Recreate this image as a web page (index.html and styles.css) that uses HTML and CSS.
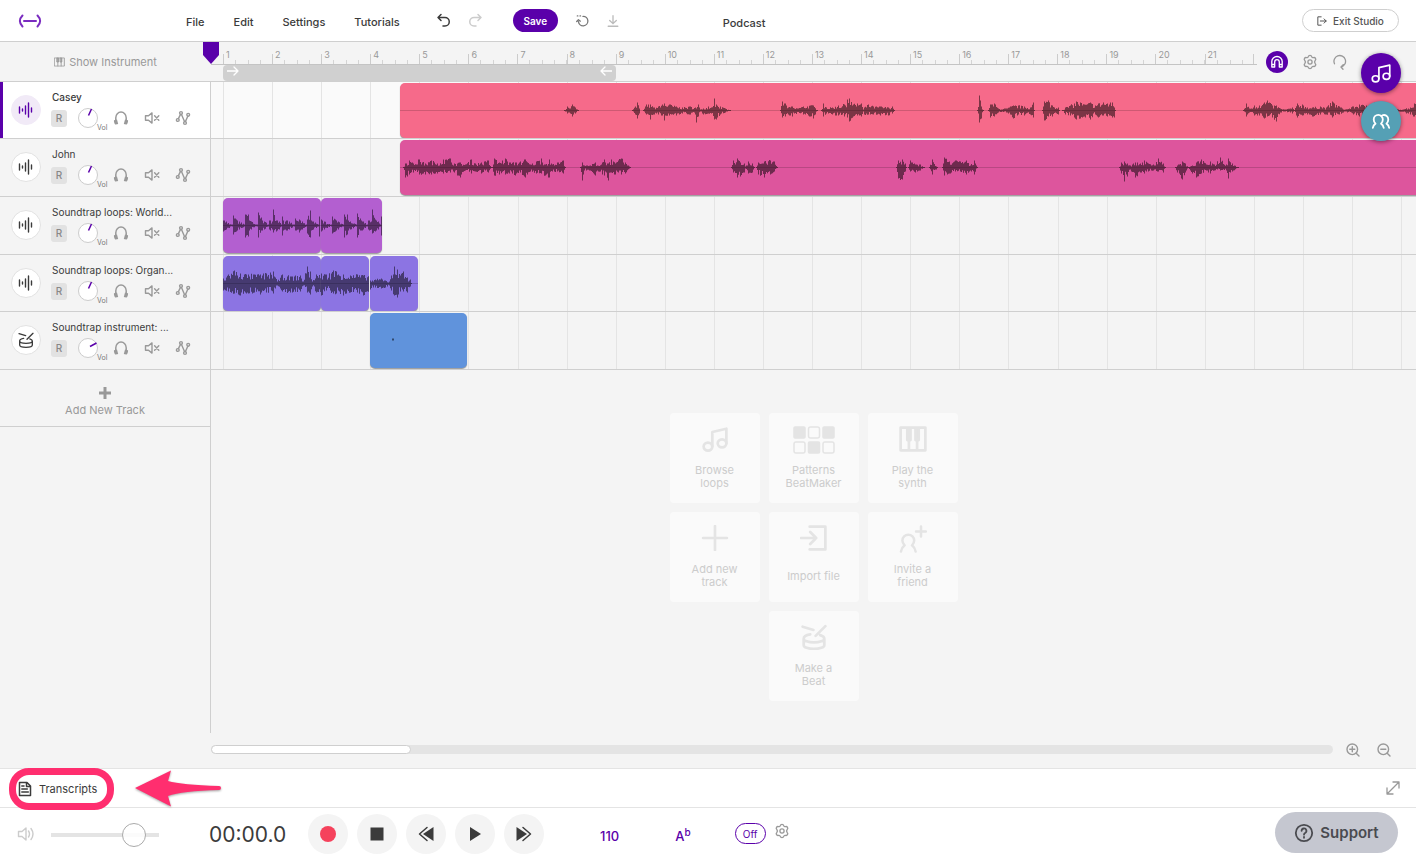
FILE: index.html
```html
<!DOCTYPE html>
<html lang="en">
<head>
<meta charset="utf-8">
<meta name="viewport" content="width=device-width, initial-scale=1">
<title>Podcast</title>
<link rel="stylesheet" href="styles.css">
</head>
<body>
<svg class="sprite" aria-hidden="true">
  <symbol id="i-wave" viewBox="0 0 16 16"><path d="M1.5 5v6M4.5 7v2M7.5 4v8M10.500 1v14M13.500 6v4"/></symbol>
  <symbol id="i-drum" viewBox="0 0 24 24"><path d="M1.500 2.500l10 3M22.500 2L13.500 11M8.500 9.500C5 10 2.500 11.500 2.500 13.500c0 2 4.200 3.500 9.500 3.500s9.500-1.500 9.500-3.500c0-1.400-1.500-2.500-3.800-3.200M2.500 13.500v6c0 2 4.200 3.500 9.500 3.500s9.500-1.500 9.500-3.500v-6"/></symbol>
  <symbol id="i-phones" viewBox="0 0 16 16"><path d="M2.800 12V7.800a5.200 5.700 0 0 1 10.400 0V12" fill="none" stroke="currentColor" stroke-width="1.500"/><path d="M1 10.200l3-.8 1.200 4.600-2.400.6c-1 0-2.200-3-1.800-4.400zM15 10.200l-3-.8-1.200 4.600 2.400.6c1 0 2.200-3 1.800-4.400z" fill="currentColor" stroke="none"/></symbol>
  <symbol id="i-mute" viewBox="0 0 16 16"><path d="M1.500 5.800h3L8 2.900v10.200l-3.500-2.900h-3zM10.600 5.800l4.200 4.400M14.800 5.800l-4.200 4.400"/></symbol>
  <symbol id="i-auto" viewBox="0 0 16 16"><g><circle cx="2.800" cy="10" r="1.400"/><circle cx="6" cy="3" r="1.400"/><circle cx="10" cy="13" r="1.400"/><circle cx="13.200" cy="4.800" r="1.400"/><path d="M3.400 8.600L5.500 4.400M6.500 4.400l3 7.200M10.400 11.600l2.400-5.400"/></g></symbol>
  <symbol id="i-gear" viewBox="0 0 16 16"><path d="M6.300 2.600C6.700 1 9.300 1 9.700 2.600c.3.900 1 1.200 1.800 1 1.700-.6 3 1.500 1.800 2.700-.7.800-.7 2.600 0 3.400 1.200 1.200-.1 3.300-1.800 2.700-.8-.2-1.500.1-1.800 1-.4 1.600-3 1.600-3.400 0-.3-.9-1-1.200-1.800-1-1.700.6-3-1.500-1.800-2.700.7-.8.7-2.600 0-3.400-1.200-1.200.1-3.300 1.800-2.700.8.200 1.500-.1 1.800-1z"/><circle cx="8" cy="8" r="2.100"/></symbol>
  <symbol id="i-note" viewBox="0 0 24 24"><ellipse cx="5.500" cy="19" rx="4" ry="3.700"/><ellipse cx="18.500" cy="16" rx="4" ry="3.700"/><path d="M9.500 19V5.500l13-3V16"/></symbol>
  <symbol id="i-keys" viewBox="0 0 16 14"><path d="M1 1h14v12H1zM5.600 7v6M10.400 7v6"/><path d="M4.600 1h2v6h-2zM9.400 1h2v6h-2z" fill="currentColor"/></symbol>
</svg>

<header class="topbar">
  <a class="logo" href="#" aria-label="Home"><svg viewBox="0 0 24 14"><path d="M4.500 1.500C1 5 1 9 4.500 12.500M19.500 1.500C23 5 23 9 19.500 12.500M6 7h12"/></svg></a>
  <nav class="menu" aria-label="Main">
    <button>File</button><button>Edit</button><button>Settings</button><button>Tutorials</button>
  </nav>
  <div class="history">
    <button aria-label="Undo"><svg viewBox="0 0 16 16"><path d="M5 1.500L2 4.500l3 3M2 4.500h7a4.200 4.200 0 0 1 0 8.500H7"/></svg></button>
    <button class="faint" aria-label="Redo"><svg viewBox="0 0 16 16"><path d="M11 1.500l3 3-3 3M14 4.500H7A4.200 4.200 0 0 0 7 13h2"/></svg></button>
  </div>
  <button class="save">Save</button>
  <div class="file-tools">
    <button aria-label="Revert"><svg viewBox="0 0 16 16"><path d="M8 2.700a5.400 5.400 0 1 1-5.200 6M.8 8.500l2-2 2.200 1.700M1.500 2.200h.6M4.600 2.200h.6"/></svg></button>
    <button class="pale" aria-label="Download"><svg viewBox="0 0 16 16"><path d="M8 2v9M4.200 7.400L8 11l3.800-3.600M2.500 14h11"/></svg></button>
  </div>
  <h1>Podcast</h1>
  <button class="exit"><svg viewBox="0 0 12 12"><path d="M5 1H1v10h4M4 6h7M8.500 3.500L11 6 8.500 8.500"/></svg>Exit Studio</button>
</header>

<main class="studio">
  <div class="timeline-head">
    <button class="show-instrument"><svg viewBox="0 0 16 14"><use href="#i-keys"/></svg>Show Instrument</button>
    <div class="ruler">
      <ol class="bars">
        <li>1</li><li>2</li><li>3</li><li>4</li><li>5</li><li>6</li><li>7</li><li>8</li><li>9</li><li>10</li><li>11</li><li>12</li><li>13</li><li>14</li><li>15</li><li>16</li><li>17</li><li>18</li><li>19</li><li>20</li><li>21</li>
      </ol>
      <div class="loop">
        <svg viewBox="0 0 12 10"><path d="M0 5h11M7 1l4 4-4 4"/></svg>
        <svg viewBox="0 0 12 10"><path d="M12 5H1M5 1L1 5l4 4"/></svg>
      </div>
      <svg class="playhead" viewBox="0 0 16 22"><path d="M0 0h16v13l-8 9-8-9z"/></svg>
    </div>
    <div class="timeline-tools">
      <button class="snap" aria-label="Snap"><svg viewBox="0 0 14 14"><path d="M1.800 12V6.500a5.200 5 0 0 1 10.400 0V12H9.300V7a2.300 2.300 0 0 0-4.600 0v5zM2 9.500h2.500M9.500 9.500H12"/></svg></button>
      <button aria-label="Timeline settings"><svg viewBox="0 0 16 16"><use href="#i-gear"/></svg></button>
      <button aria-label="Loop"><svg viewBox="0 0 16 16"><path d="M2.500 9.800A5.800 5.800 0 1 1 9 13M11.200 10.600L9 13l2 2.300"/></svg></button>
    </div>
  </div>

  <section class="tracks" aria-label="Tracks">
    <article class="track selected">
      <div class="track-head">
        <span class="avatar"><svg viewBox="0 0 16 16"><use href="#i-wave"/></svg></span>
        <div class="track-body">
          <h2>Casey</h2>
          <div class="controls"><button class="rec" aria-label="Arm">R</button><button class="knob" aria-label="Volume"><svg viewBox="0 0 20 20"><path d="M10.500 7.500L13.500 1"/></svg><span>Vol</span></button><div class="icons"><button aria-label="Solo"><svg><use href="#i-phones"/></svg></button><button aria-label="Mute"><svg><use href="#i-mute"/></svg></button><button aria-label="Automation"><svg><use href="#i-auto"/></svg></button></div></div>
        </div>
      </div>
      <div class="lane"><div class="clip coral" style="left:189px;width:1280px"><svg class="wave" data-wave="casey"></svg></div></div>
    </article>
    <article class="track">
      <div class="track-head">
        <span class="avatar"><svg viewBox="0 0 16 16"><use href="#i-wave"/></svg></span>
        <div class="track-body">
          <h2>John</h2>
          <div class="controls"><button class="rec" aria-label="Arm">R</button><button class="knob" aria-label="Volume"><svg viewBox="0 0 20 20"><path d="M10.500 7.500L13.500 1"/></svg><span>Vol</span></button><div class="icons"><button aria-label="Solo"><svg><use href="#i-phones"/></svg></button><button aria-label="Mute"><svg><use href="#i-mute"/></svg></button><button aria-label="Automation"><svg><use href="#i-auto"/></svg></button></div></div>
        </div>
      </div>
      <div class="lane"><div class="clip pink" style="left:189px;width:1280px"><svg class="wave" data-wave="john"></svg></div></div>
    </article>
    <article class="track">
      <div class="track-head">
        <span class="avatar"><svg viewBox="0 0 16 16"><use href="#i-wave"/></svg></span>
        <div class="track-body">
          <h2>Soundtrap loops: World...</h2>
          <div class="controls"><button class="rec" aria-label="Arm">R</button><button class="knob" aria-label="Volume"><svg viewBox="0 0 20 20"><path d="M10.500 7.500L13.500 1"/></svg><span>Vol</span></button><div class="icons"><button aria-label="Solo"><svg><use href="#i-phones"/></svg></button><button aria-label="Mute"><svg><use href="#i-mute"/></svg></button><button aria-label="Automation"><svg><use href="#i-auto"/></svg></button></div></div>
        </div>
      </div>
      <div class="lane">
        <div class="clip purple" style="left:12px;width:98px"><svg class="wave" data-wave="worldA"></svg></div>
        <div class="clip purple" style="left:110px;width:61px"><svg class="wave" data-wave="worldB"></svg></div>
      </div>
    </article>
    <article class="track">
      <div class="track-head">
        <span class="avatar"><svg viewBox="0 0 16 16"><use href="#i-wave"/></svg></span>
        <div class="track-body">
          <h2>Soundtrap loops: Organ...</h2>
          <div class="controls"><button class="rec" aria-label="Arm">R</button><button class="knob" aria-label="Volume"><svg viewBox="0 0 20 20"><path d="M10.500 7.500L13.500 1"/></svg><span>Vol</span></button><div class="icons"><button aria-label="Solo"><svg><use href="#i-phones"/></svg></button><button aria-label="Mute"><svg><use href="#i-mute"/></svg></button><button aria-label="Automation"><svg><use href="#i-auto"/></svg></button></div></div>
        </div>
      </div>
      <div class="lane">
        <div class="clip violet" style="left:12px;width:98px"><svg class="wave" data-wave="organA"></svg></div>
        <div class="clip violet" style="left:110px;width:48px"><svg class="wave" data-wave="organB"></svg></div>
        <div class="clip violet" style="left:159px;width:48px"><svg class="wave" data-wave="organC"></svg></div>
      </div>
    </article>
    <article class="track">
      <div class="track-head">
        <span class="avatar"><svg class="drum" viewBox="0 0 24 24"><use href="#i-drum"/></svg></span>
        <div class="track-body">
          <h2>Soundtrap instrument: ...</h2>
          <div class="controls"><button class="rec" aria-label="Arm">R</button><button class="knob" aria-label="Volume"><svg viewBox="0 0 20 20"><path d="M12 8.500L18.500 5"/></svg><span>Vol</span></button><div class="icons"><button aria-label="Solo"><svg><use href="#i-phones"/></svg></button><button aria-label="Mute"><svg><use href="#i-mute"/></svg></button><button aria-label="Automation"><svg><use href="#i-auto"/></svg></button></div></div>
        </div>
      </div>
      <div class="lane"><div class="clip blue" style="left:159px;width:97px"><svg class="wave" viewBox="0 0 97 55"><path d="M22 25.500h2v2h-2z"/></svg></div></div>
    </article>
  </section>

  <div class="workspace">
    <div class="side">
      <button class="add-track"><svg viewBox="0 0 12 12"><path d="M6 0v12M0 6h12"/></svg>Add New Track</button>
    </div>
    <div class="start-area">
      <div class="tiles">
        <button class="tile"><svg viewBox="0 0 24 24"><use href="#i-note"/></svg><span>Browse<br>loops</span></button>
        <button class="tile"><svg class="pads" viewBox="0 0 42 28"><g fill="currentColor"><rect x="1" y="1" width="11" height="11" rx="1"/><rect x="30" y="1" width="11" height="11" rx="1"/><rect x="15.500" y="16" width="11" height="11" rx="1"/></g><rect x="15.500" y="1" width="11" height="11" rx="2"/><rect x="1" y="16" width="11" height="11" rx="2"/><rect x="30" y="16" width="11" height="11" rx="2"/></svg><span>Patterns<br>BeatMaker</span></button>
        <button class="tile"><svg viewBox="0 0 26 24"><path d="M1.500 1.500h23v21h-23zM9.200 12v10M16.800 12v10"/><path d="M7.700 2h3v11h-3zM15.300 2h3v11h-3z" fill="currentColor"/></svg><span>Play the<br>synth</span></button>
        <button class="tile"><svg viewBox="0 0 24 24"><path d="M12 1v22M1 12h22"/></svg><span>Add new<br>track</span></button>
        <button class="tile"><svg viewBox="0 0 24 24"><path d="M8 1.500h14.500v21H8M0 12h14M8.500 6.500L14 12l-5.500 5.500"/></svg><span>Import file</span></button>
        <button class="tile"><svg class="invite" viewBox="0 0 28 28"><path d="M2 26.500c.6-3 1.800-4.800 3.600-6.200-1.400-1.400-2.200-2.900-2.200-4.700a5.900 5.900 0 0 1 11.800 0c0 1.800-.8 3.300-2.200 4.700 1.800 1.400 3 3.200 3.600 6.200M22 1.500v10M17 6.500h10"/></svg><span>Invite a<br>friend</span></button>
        <button class="tile last"><svg viewBox="0 0 24 24"><use href="#i-drum"/></svg><span>Make a<br>Beat</span></button>
      </div>
    </div>
  </div>

  <div class="scroll-row">
    <div class="scrollbar"><div class="thumb"></div></div>
    <button aria-label="Zoom in"><svg viewBox="0 0 16 16"><circle cx="7.300" cy="7.300" r="5.300"/><path d="M11.200 11.200L14 14M4.800 7.300h5M7.300 4.800v5"/></svg></button>
    <button aria-label="Zoom out"><svg viewBox="0 0 16 16"><circle cx="7.300" cy="7.300" r="5.300"/><path d="M11.200 11.200L14 14M4.800 7.300h5"/></svg></button>
  </div>

  <div class="dock">
    <button class="dock-loops" aria-label="Loops"><svg viewBox="0 0 24 24"><use href="#i-note"/></svg></button>
    <button class="dock-people" aria-label="Collaborators"><svg viewBox="0 0 22 18"><path d="M2 16.500c.4-2.300 1.400-3.700 3-4.600C3.700 10.800 3 9.200 3 7.300a5 5 0 0 1 10 0c0 1.900-.7 3.500-2 4.600 1.600.9 2.600 2.300 3 4.600M12.500 2.700A4.800 4.800 0 0 1 19 7.300c0 1.900-.7 3.500-2 4.600 1.600.9 2.600 2.300 3 4.600"/></svg></button>
  </div>
</main>

<section class="transcripts">
  <button class="transcripts-toggle"><svg viewBox="0 0 14 16"><path d="M1.500 1.500H9l3.500 3.500v9.500h-11zM8.500 1.500V5.500H12.500M3.800 5H6M3.800 8h5.500M3.800 11h6.500"/></svg>Transcripts</button>
  <button class="expand" aria-label="Expand"><svg viewBox="0 0 14 14"><path d="M1.500 12.500l11-11M7 1h6v6M1 7v6h6"/></svg></button>
  <span class="highlight"></span>
  <svg class="pointer" viewBox="0 0 86 38"><path d="M0 18L36 0.500 33 11q14 4 51 5a1.500 1.500 0 0 1 0 4q-37 1-51 6l3 10.500z"/></svg>
</section>

<footer class="transport">
  <label class="volume" for="master"><svg viewBox="0 0 18 16"><path d="M1.500 5.500h3.500l4-3.500v12l-4-3.500H1.500zM11.500 5q2 3 0 6M14 2.500q4 5.500 0 11"/></svg></label>
  <input id="master" type="range" min="0" max="100" value="84" aria-label="Master volume">
  <output class="time">00:00.0</output>
  <div class="buttons">
    <button aria-label="Record"><svg viewBox="0 0 16 16"><circle cx="8" cy="8" r="8" fill="#f5425c"/></svg></button>
    <button aria-label="Stop"><svg viewBox="0 0 16 16"><path d="M1.500 1.500h13v13h-13z"/></svg></button>
    <button aria-label="Rewind"><svg viewBox="0 0 16 16"><path d="M15.500 1v14L5 8z"/><path d="M9 1.500L1.500 8 9 14.500" fill="none" stroke="currentColor" stroke-width="1.500"/></svg></button>
    <button aria-label="Play"><svg viewBox="0 0 16 16"><path d="M3 1v14l11-7z"/></svg></button>
    <button aria-label="Forward"><svg viewBox="0 0 16 16"><path d="M.5 1v14L11 8z"/><path d="M7 1.500L14.500 8 7 14.500" fill="none" stroke="currentColor" stroke-width="1.500"/></svg></button>
  </div>
  <button class="tempo">110</button>
  <button class="key">A<sup>b</sup></button>
  <button class="metronome">Off</button>
  <button class="metro-settings" aria-label="Metronome settings"><svg viewBox="0 0 16 16"><use href="#i-gear"/></svg></button>
  <button class="support"><svg viewBox="0 0 20 20"><circle cx="10" cy="10" r="8.200"/><path d="M7.600 7.800a2.400 2.400 0 1 1 3.500 2.200c-.8.400-1.100.8-1.100 1.700M10 13.800v1"/></svg>Support</button>
</footer>
<script src="waves.js"></script>
</body>
</html>
```

FILE: styles.css
```css
:root {
  --purple: #5a00aa;
  --line: #cfcfcf;
  --soft: #e4e4e4;
  --bg: #f4f4f4;
  --ink: #3b3b3b;
  --mute: #999;
  --bar: calc(1080px / 22);
}
* { box-sizing: border-box; }
body {
  margin: 0;
  height: 100vh;
  display: flex;
  flex-direction: column;
  overflow: hidden;
  background: #fff;
  color: var(--ink);
  font: 11px/16px Inter, "Liberation Sans", sans-serif;
}
button {
  border: 0;
  padding: 0;
  background: none;
  color: inherit;
  font: inherit;
  display: flex;
  align-items: center;
  justify-content: center;
}
svg { display: block; fill: none; stroke: currentColor; stroke-linecap: round; stroke-linejoin: round; }
.sprite { position: absolute; width: 0; height: 0; }
h1, h2, ol { margin: 0; padding: 0; font: inherit; }

/* Top bar */
.topbar {
  flex: none;
  height: 42px;
  padding: 0 17px;
  border-bottom: 1px solid var(--line);
  display: flex;
  align-items: center;
}
.logo { color: #7a2cc0; }
.logo svg { width: 26px; height: 14px; stroke-width: 2; }
.menu { display: flex; gap: 29px; margin-left: 143px; padding-top: 2px; font-weight: 500; }
.history { display: flex; gap: 15px; margin-left: 36px; }
.history svg { width: 16px; height: 16px; stroke-width: 1.5; }
.history .faint { color: #ccc; }
.save {
  margin-left: 30px;
  width: 45px;
  height: 23px;
  border-radius: 12px;
  background: var(--purple);
  color: #fff;
  font-size: 10px;
  font-weight: 600;
}
.file-tools { display: flex; gap: 16px; margin-left: 18px; color: #777; }
.file-tools svg { width: 14px; height: 14px; stroke-width: 1.5; }
.file-tools .pale { color: #bbb; }
h1 { margin-left: 103px; padding-top: 4px; font-weight: 500; }
.exit {
  margin-left: auto;
  width: 97px;
  height: 23px;
  gap: 6px;
  border: 1px solid var(--line);
  border-radius: 12px;
  color: #555;
  font-size: 10px;
  font-weight: 500;
}
.exit svg { width: 10px; height: 10px; stroke-width: 1.2; }

/* Studio */
.studio {
  position: relative;
  flex: 1;
  min-height: 0;
  display: flex;
  flex-direction: column;
  background: var(--bg);
}
.timeline-head { flex: none; display: flex; height: 40px; border-bottom: 1px solid var(--line); }
.show-instrument { flex: none; width: 211px; gap: 4px; color: var(--mute); }
.show-instrument svg { width: 11px; height: 10px; stroke-width: 1.3; }
.ruler { position: relative; flex: none; width: 1046px; }
.bars {
  height: 23px;
  padding-left: 12px;
  border-bottom: 1px solid #c4c4c4;
  display: grid;
  grid-template-columns: repeat(21, var(--bar));
  list-style: none;
  color: var(--mute);
  font-size: 9px;
}
.bars li {
  padding: 5px 0 0 3px;
  background:
    linear-gradient(#ccc, #ccc) 0 100% / 1px 10px no-repeat,
    repeating-linear-gradient(to right, #d4d4d4 0 1px, transparent 1px calc(var(--bar) / 4)) 0 100% / 100% 4px no-repeat;
}
.bars li:last-child {
  background:
    linear-gradient(#ccc, #ccc) 0 100% / 1px 10px no-repeat,
    linear-gradient(#ccc, #ccc) 100% 100% / 1px 10px no-repeat,
    repeating-linear-gradient(to right, #d4d4d4 0 1px, transparent 1px calc(var(--bar) / 4)) 0 100% / 100% 4px no-repeat;
}
.loop {
  margin-left: 12px;
  width: calc(var(--bar) * 8);
  height: 16px;
  padding: 1px 4px 5px;
  border-radius: 4px;
  background: #d0d0d0;
  color: #fff;
  display: flex;
  justify-content: space-between;
}
.loop svg { width: 12px; height: 10px; stroke-width: 1.3; }
.playhead { position: absolute; left: -8px; top: 0; width: 16px; height: 22px; fill: var(--purple); stroke: none; }
.timeline-tools { display: flex; align-items: center; gap: 14px; margin-left: 9px; color: var(--mute); }
.timeline-tools svg { width: 16px; height: 16px; stroke-width: 1.3; }
.snap { width: 22px; height: 22px; border-radius: 50%; background: var(--purple); color: #fff; }
.timeline-tools .snap svg { width: 14px; height: 14px; }

/* Tracks */
.tracks { flex: none; display: grid; grid-template-rows: 57px 58px 58px 57px 58px; }
.track { display: flex; border-bottom: 1px solid var(--line); }
.track-head {
  flex: none;
  width: 211px;
  padding-left: 8px;
  border-left: 3px solid transparent;
  border-right: 1px solid var(--line);
  display: flex;
  gap: 10px;
}
.selected .track-head { background: #fff; border-left-color: var(--purple); }
.selected .lane { background-color: #fafafa; }
.avatar {
  width: 30px;
  height: 30px;
  margin-top: 13px;
  border: 1px solid #e2e2e2;
  border-radius: 50%;
  background: #fff;
  display: grid;
  place-items: center;
}
.avatar svg { width: 16px; height: 16px; stroke-width: 1.4; }
.avatar .drum { stroke-width: 2; }
.selected .avatar { background: #f1eaf7; border-color: #f1eaf7; color: var(--purple); }
.track-body { padding-top: 7px; }
.track h2 { padding-left: 1px; font-size: 10px; }
.selected h2 { font-weight: 500; }
.controls { display: flex; align-items: center; margin-top: 3px; }
.rec { width: 16px; height: 17px; border-radius: 3px; background: #e2e2e2; color: #888; font-size: 10px; font-weight: 500; }
.knob {
  position: relative;
  width: 20px;
  height: 20px;
  margin: 0 15px 0 11px;
  border: 1px solid #ccc;
  border-radius: 50%;
  background: #fff;
}
.knob svg { width: 20px; height: 20px; flex: none; color: var(--purple); stroke-width: 1.5; stroke-linecap: butt; }
.knob span { position: absolute; left: 18px; top: 14px; font-size: 7px; line-height: 10px; color: #777; }
.icons { display: flex; gap: 15px; color: var(--mute); }
.icons svg { width: 16px; height: 16px; stroke-width: 1.4; }
.lane {
  position: relative;
  flex: 1;
  overflow: hidden;
  background-image: repeating-linear-gradient(to right, #e4e4e4 0 1px, transparent 1px var(--bar));
  background-position: 12px 0;
  background-repeat: no-repeat;
}
.clip {
  position: absolute;
  top: 1px;
  height: 55px;
  border-radius: 5px;
  overflow: hidden;
  box-shadow: 0 1px 1px #999;
}
.wave { width: 100%; height: 55px; fill: #000; fill-opacity: .5; stroke: none; }
.coral { background: #f66a8a; }
.pink { background: #dd559d; }
.purple { background: #b35fd0; }
.violet { background: #8c74e3; }
.blue { background: #6093dc; }

/* Workspace */
.workspace { flex: 1; min-height: 0; display: flex; }
.side { flex: none; width: 211px; border-right: 1px solid var(--line); }
.add-track {
  width: 100%;
  height: 57px;
  padding-top: 8px;
  border-bottom: 1px solid var(--line);
  flex-direction: column;
  gap: 3px;
  color: var(--mute);
}
.add-track svg { width: 12px; height: 12px; stroke-width: 3; stroke-linecap: butt; }
.start-area { flex: 1; display: flex; justify-content: center; padding-top: 43px; }
.tiles { display: grid; grid-template-columns: repeat(3, 90px); grid-auto-rows: 90px; gap: 9px; }
.tile {
  flex-direction: column;
  justify-content: flex-start;
  gap: 10px;
  padding-top: 13px;
  border-radius: 4px;
  background: #fafafa;
  color: #e4e4e4;
  line-height: 13px;
}
.tile.last { grid-column: 2; }
.tile svg { width: 28px; height: 26px; margin-bottom: 2px; stroke-width: 2.5; }
.tile .pads { width: 42px; height: 28px; margin-bottom: 0; stroke-width: 1.5; }
.tile .invite { height: 28px; margin-bottom: 0; }
.tile span { color: #ccc; min-height: 26px; display: grid; align-items: center; }

.scroll-row {
  flex: none;
  height: 35px;
  padding: 0 24px 2px 211px;
  display: flex;
  align-items: center;
  gap: 15px;
  color: var(--mute);
}
.scroll-row svg { width: 16px; height: 16px; stroke-width: 1.4; }
.scrollbar { flex: 1; height: 9px; margin-right: -3px; border-radius: 5px; background: #e4e4e4; }
.thumb { width: 200px; height: 9px; border: 1px solid var(--line); border-radius: 5px; background: #fff; }

.dock { position: absolute; right: 15px; top: 11px; display: flex; flex-direction: column; gap: 8px; }
.dock button { width: 40px; height: 40px; border-radius: 50%; color: #fff; box-shadow: 0 1px 4px rgba(0, 0, 0, .45); }
.dock .dock-loops { background: var(--purple); }
.dock .dock-people { background: #55a0b5; }
.dock svg { width: 20px; height: 20px; stroke-width: 2; }

/* Transcripts */
.transcripts {
  position: relative;
  flex: none;
  height: 40px;
  padding: 0 16px 0 18px;
  border-top: 1px solid var(--soft);
  border-bottom: 1px solid var(--soft);
  display: flex;
  align-items: center;
  justify-content: space-between;
}
.transcripts-toggle { gap: 7px; padding-top: 2px; }
.transcripts-toggle svg { width: 14px; height: 16px; stroke-width: 1.5; }
.expand { color: var(--mute); }
.expand svg { width: 14px; height: 14px; stroke-width: 1.3; }
.highlight {
  position: absolute;
  left: 9px;
  top: -1px;
  width: 105px;
  height: 42px;
  border: 7px solid #ff2e6f;
  border-radius: 20px;
  z-index: 1;
}
.pointer {
  position: absolute;
  left: 135px;
  top: 1px;
  width: 86px;
  height: 38px;
  fill: #ff2e6f;
  stroke: none;
  filter: drop-shadow(0 1px 1px rgba(0, 0, 0, .35));
}

/* Transport */
.transport { flex: none; height: 51px; padding: 0 18px 0 17px; display: flex; align-items: center; }
.volume { color: #ccc; }
.volume svg { width: 18px; height: 16px; stroke-width: 1.4; }
#master { appearance: none; width: 108px; height: 24px; margin: 2px 0 0 16px; background: linear-gradient(#e4e4e4, #e4e4e4) center / 100% 4px no-repeat; }
#master::-webkit-slider-thumb {
  appearance: none;
  width: 24px;
  height: 24px;
  border: 1px solid #aaa;
  border-radius: 50%;
  background: rgba(255, 255, 255, .85);
}
.time { width: 149px; padding: 2px 0 0 50px; font-size: 21px; line-height: 24px; }
.buttons { display: flex; gap: 9px; padding-top: 1px; }
.buttons button { width: 40px; height: 40px; border-radius: 50%; background: var(--bg); }
.buttons svg { width: 16px; height: 16px; fill: currentColor; stroke: none; }
.tempo, .key { margin: 5px 0 0 56px; color: var(--purple); font-size: 13px; font-weight: 500; }
.key sup { font-size: 10px; line-height: 8px; align-self: flex-start; }
.metronome {
  width: 31px;
  height: 21px;
  margin-left: 44px;
  border: 1px solid var(--purple);
  border-radius: 11px;
  color: var(--purple);
  font-size: 10px;
}
.metro-settings { margin: 0 0 6px 8px; color: var(--mute); }
.metro-settings svg { width: 16px; height: 16px; stroke-width: 1.3; }
.support {
  width: 123px;
  height: 41px;
  margin: 0 0 2px auto;
  gap: 6px;
  border-radius: 21px;
  background: #c5c7d0;
  color: #4a4b50;
  font-size: 15px;
  font-weight: 600;
}
.support svg { width: 20px; height: 20px; stroke-width: 1.8; }
```

FILE: waves.js
```js
// Each region is a list of [x, peak above, peak below]; x counts from the clip origin given.
const WAVES = {
  casey: { origin: 400, regions: [
    [[564,0,0],[567,4,3],[569,2,2],[572,6,6],[575,3,3],[578,0,0]],
    [[632,0,0],[635,4,4],[637,8,8],[639,2,3]],
    [[643,0,0],[646,6,4],[650,6,9],[653,3,4],[658,4,4],[662,6,5],[664,7,10],[669,6,5],[676,4,5],[682,3,3],[690,4,4],[695,3,4],[696,2,12],[698,6,6],[700,1,1],[703,2,4],[708,4,3],[711,3,3],[714,12,9],[716,6,9],[720,4,4],[725,2,2],[730,0,0]],
    [[780,0,0],[782,9,7],[785,7,6],[788,3,4],[792,4,6],[794,2,3],[803,4,4],[810,5,6],[813,5,8],[817,0,0]],
    [[821,0,0],[823,7,6],[826,3,3],[832,3,4],[838,5,5],[844,6,6],[847,11,7],[849,12,11],[853,6,6],[857,7,5],[861,7,6],[863,1,1]],
    [[864,3,4],[868,6,4],[873,4,4],[880,4,5],[888,3,5],[892,4,3],[894,0,0]],
    [[977,0,0],[979,15,12],[981,4,8],[983,0,0]],
    [[988,0,0],[990,6,7],[994,7,6],[998,2,2],[1006,2,2],[1013,5,8],[1018,5,4],[1024,4,5],[1030,3,4],[1033,8,7],[1034,0,0]],
    [[1042,0,0],[1044,9,10],[1048,10,6],[1052,5,6],[1058,3,4],[1059,0,0]],
    [[1062,0,0],[1065,3,4],[1070,5,5],[1076,9,9],[1080,8,8],[1084,6,6],[1090,8,9],[1095,5,4],[1098,7,7],[1103,8,5],[1107,7,6],[1112,8,7],[1114,3,7],[1115,0,0]],
    [[1243,0,0],[1246,7,6],[1249,2,2],[1254,5,5],[1259,5,5],[1264,8,8],[1267,10,6],[1272,5,7],[1276,5,11],[1280,2,2],[1285,1,1],[1292,3,3],[1294,0,0],[1297,7,7],[1302,6,5],[1307,3,4],[1312,3,6],[1320,4,4],[1326,3,4],[1332,9,7],[1339,4,4],[1345,1,1],[1353,4,4],[1359,6,6],[1366,5,4],[1374,8,4],[1385,5,4],[1398,1,1],[1410,3,4],[1414,7,6],[1420,4,4]]
  ]},
  john: { origin: 400, regions: [
    [[403,0,0],[405,4,10],[409,7,7],[413,4,5],[419,8,7],[425,4,7],[431,7,7],[437,4,6],[443,8,6],[450,9,5],[454,4,5],[460,5,10],[465,3,3],[471,8,6],[475,4,4],[481,5,6],[488,7,5],[491,0,0]],
    [[492,0,0],[494,9,8],[499,5,7],[505,9,7],[509,5,6],[515,5,8],[520,6,5],[525,8,10],[530,3,4],[536,6,6],[541,9,6],[545,3,8],[549,8,10],[552,3,4],[557,5,4],[563,7,6],[565,0,0]],
    [[580,0,0],[582,5,13],[584,2,3],[590,2,3],[595,5,8],[597,2,3],[602,5,7],[604,8,8],[608,4,13],[611,8,5],[615,4,7],[618,7,5],[621,9,7],[625,5,6],[630,0,0]],
    [[731,0,0],[733,7,5],[737,9,10],[740,5,9],[744,4,5],[745,1,1],[748,6,6],[752,4,5],[754,0,0]],
    [[756,0,0],[758,5,7],[764,6,10],[770,7,7],[774,6,4],[777,0,0]],
    [[896,0,0],[898,7,11],[902,8,12],[905,4,4],[906,0,0]],
    [[908,0,0],[910,7,4],[915,3,5],[920,3,3],[924,0,0]],
    [[929,0,0],[932,8,7],[936,1,2],[937,0,0]],
    [[942,0,0],[944,10,8],[949,6,6],[955,7,4],[960,6,4],[966,7,7],[970,2,3],[974,7,7],[976,2,1],[977,0,0]],
    [[1119,0,0],[1121,5,6],[1124,6,14],[1127,4,9],[1130,2,2],[1135,5,10],[1140,4,5],[1144,7,6],[1148,4,4],[1153,3,3],[1158,9,4],[1163,4,5],[1165,0,0]],
    [[1175,0,0],[1177,2,5],[1182,6,12],[1185,4,5],[1188,0,0],[1192,2,6],[1196,5,10],[1201,8,6],[1206,3,3],[1210,6,6],[1214,3,3],[1220,10,3],[1226,3,3],[1228,9,11],[1232,4,4],[1238,0,0]]
  ]},
  worldA: { origin: 223, hits: [[223,5,6],[233,10,9],[236,6,6],[245,11,12],[248,11,11],[258,13,12],[261,8,5],[269,5,4],[273,16,7],[276,5,6],[282,9,10],[286,5,5],[295,7,5],[299,6,7],[307,6,8],[310,15,12],[319,9,11]], end: 321 },
  worldB: { origin: 321, hits: [[321,6,6],[332,9,8],[335,6,6],[344,11,12],[347,11,9],[357,12,12],[360,7,5],[368,5,4],[372,16,8],[375,6,6],[381,9,10]], end: 382 },
  organA: { origin: 223, regions: [
    [[223,5,7],[228,9,8],[234,13,10],[240,10,12],[246,9,10],[254,9,9],[260,9,11],[266,10,9],[273,12,10],[277,2,2],[282,9,8],[290,7,9],[300,8,8],[303,2,2],[307,17,9],[310,12,11],[312,2,3],[316,9,9],[321,8,9]]] },
  organB: { origin: 321, regions: [
    [[321,10,12],[326,9,7],[333,13,10],[336,12,10],[343,9,12],[350,8,9],[357,9,9],[363,8,12],[369,8,8]]] },
  organC: { origin: 370, regions: [
    [[370,3,6],[375,4,4],[381,5,5],[385,3,4],[389,2,2],[391,8,7],[394,17,12],[397,14,14],[400,8,8],[403,12,8],[407,6,9],[410,4,3],[411,0,0]]] }
};

let seed = 7;
function noise() {
  seed = (seed * 16807) % 2147483647;
  return seed / 2147483647;
}

// A hit is one loud column that falls off fast to a thin tail before the next one.
function fromHits(hits, end) {
  const points = [];
  hits.forEach(([x, up, down], i) => {
    const next = i + 1 < hits.length ? hits[i + 1][0] : end;
    points.push([x, up, down]);
    if (next - x > 3) points.push([x + 1, 5, 5], [x + 3, 4, 4]);
    if (next - x > 5) points.push([next - 1, 1, 1]);
  });
  return points;
}

function column(x, up, down, mid) {
  const top = (mid - Math.max(up, 0.5)).toFixed(1);
  const bottom = (mid + Math.max(down, 0.5)).toFixed(1);
  return `M${x} ${top}h1V${bottom}h-1z`;
}

function regionPath(points, origin, mid) {
  let d = "";
  points.forEach(([x, up, down], i) => {
    d += column(x - origin, up, down, mid);
    const next = points[i + 1];
    if (!next) return;
    for (let px = x + 1; px < next[0]; px += 1) {
      const t = (px - x) / (next[0] - x);
      const rise = 0.35 + noise() * 0.75;
      const fall = 0.35 + noise() * 0.75;
      d += column(px - origin, (up + (next[1] - up) * t) * rise, (down + (next[2] - down) * t) * fall, mid);
    }
  });
  return d;
}

document.querySelectorAll("[data-wave]").forEach((svg) => {
  const wave = WAVES[svg.dataset.wave];
  const regions = wave.hits ? [fromHits(wave.hits, wave.end)] : wave.regions;
  const d = regions.map((r) => regionPath(r, wave.origin, 27.5)).join("");
  svg.innerHTML = `<rect y="27" width="100%" height="1" fill-opacity=".16"/><path d="${d}"/>`;
});
```
